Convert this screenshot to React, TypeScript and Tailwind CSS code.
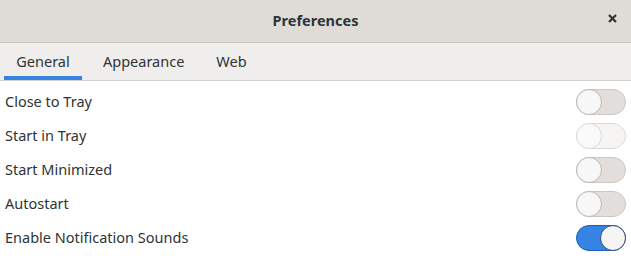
import React from "react";

function Toggle({ on, faded }: { on?: boolean; faded?: boolean }) {
  if (on) {
    return (
      <div className="relative w-[50px] h-[26px] rounded-full bg-[#3584e4] border border-[#1c5fb0]">
        <div className="absolute right-[-1px] top-[-1px] w-[26px] h-[26px] rounded-full bg-[#f6f5f4] border border-[#2b4f7e]" />
      </div>
    );
  }
  return (
    <div
      className={
        "relative w-[50px] h-[26px] rounded-full border " +
        (faded ? "bg-[#f6f5f4] border-[#dedcd9]" : "bg-[#e1dedb] border-[#cdc7c2]")
      }
    >
      <div
        className={
          "absolute left-[-1px] top-[-1px] w-[26px] h-[26px] rounded-full border " +
          (faded ? "bg-[#fbfafa] border-[#dedcd9]" : "bg-[#f8f7f7] border-[#bfb8b1]")
        }
      />
    </div>
  );
}

export default function App() {
  const rows: { label: string; on?: boolean; faded?: boolean }[] = [
    { label: "Close to Tray" },
    { label: "Start in Tray", faded: true },
    { label: "Start Minimized" },
    { label: "Autostart" },
    { label: "Enable Notification Sounds", on: true },
  ];
  return (
    <div
      className="w-[631px] h-[272px] bg-white text-[#2e3436] overflow-hidden"
      style={{ fontFamily: '"Noto Sans", "Open Sans", sans-serif' }}
    >
      <div className="h-[43px] bg-[#dfdcd8] border-b border-[#c6c2bd] flex items-center justify-center relative">
        <span className="text-[14.5px] font-bold text-[#2e3436] pb-[1px]">Preferences</span>
        <svg
          className="absolute left-[608px] top-[14px]"
          width="9"
          height="9"
          viewBox="0 0 9 9"
        >
          <path d="M1 1 L8 8 M8 1 L1 8" stroke="#2e3436" strokeWidth="2.2" strokeLinecap="butt" />
        </svg>
      </div>
      <div className="h-[38px] bg-[#f0eeec] border-b border-[#d3cfcb] flex items-stretch">
        <div className="ml-[4px] w-[78px] flex items-center justify-center border-b-[4px] border-[#3584e4] pt-[4px] text-[14.5px]">
          General
        </div>
        <div className="ml-[21px] flex items-center text-[14.5px]">Appearance</div>
        <div className="ml-[32px] flex items-center text-[14.5px]">Web</div>
      </div>
      <div className="pt-[4px]">
        {rows.map((r) => (
          <div key={r.label} className="h-[34px] flex items-center justify-between pl-[5px] pr-[5px]">
            <span className="text-[14.5px]">{r.label}</span>
            <Toggle on={r.on} faded={r.faded} />
          </div>
        ))}
      </div>
    </div>
  );
}
